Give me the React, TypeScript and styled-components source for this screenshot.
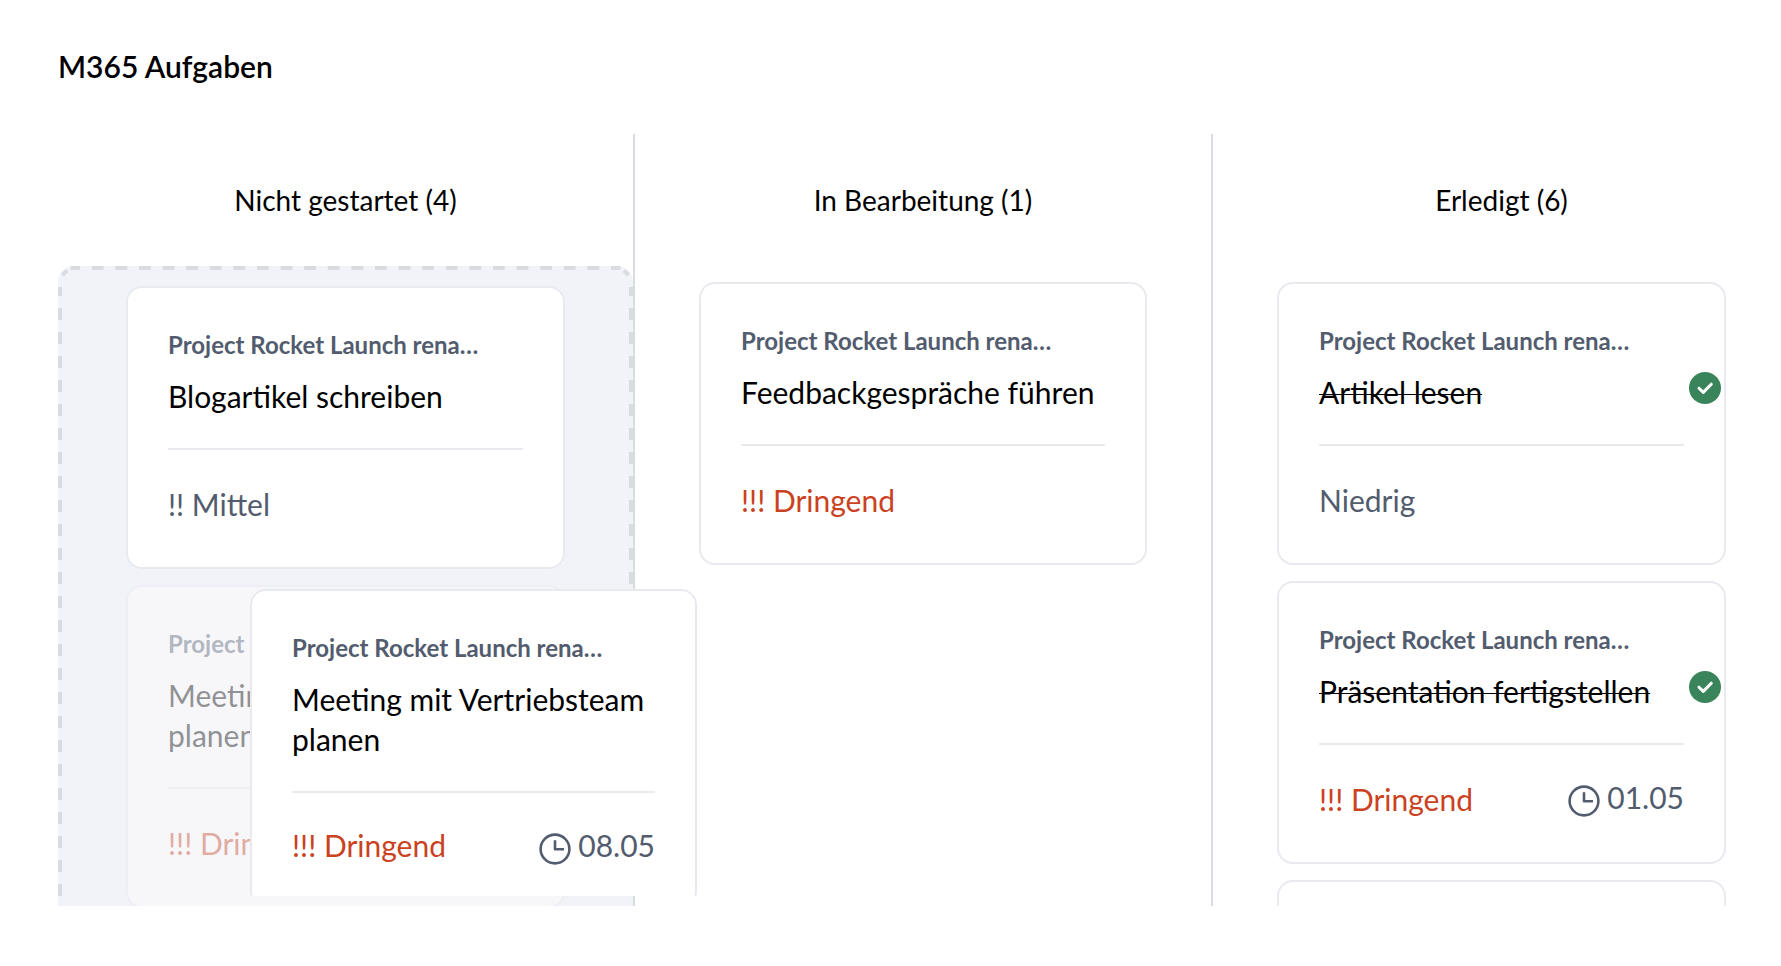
import React from "react";
import styled, { createGlobalStyle, css } from "styled-components";

const GlobalStyle = createGlobalStyle`
  *, *::before, *::after { box-sizing: border-box; }
  html, body { margin: 0; background: #ffffff; }
  body { font-family: Lato, Carlito, sans-serif; color: #000000; }
  h1, h2, h3, p, ul { margin: 0; padding: 0; }
`;

const Page = styled.main`
  display: flex;
  flex-direction: column;
  height: 100vh;
  padding: 45px 55px 60px 58px;
  overflow: hidden;
`;

const PageTitle = styled.h1`
  font-size: 30px;
  line-height: 42px;
  font-weight: 600;
  margin-bottom: 47px;
`;

const BoardArea = styled.div`
  position: relative;
  flex: 1;
  min-height: 0;
`;

const Board = styled.div`
  display: grid;
  grid-template-columns: 577fr 578fr 513fr;
  height: 100%;
  overflow: hidden;
`;

const Column = styled.section`
  display: flex;
  flex-direction: column;
  min-width: 0;
  min-height: 0;
  border-right: 2px solid #d8dbe0;

  &:last-child {
    border-right: 0;
  }
`;

const ColumnTitle = styled.h2<{ $inset?: "both" | "left" }>`
  padding: 48px ${(p) => (p.$inset === "both" ? 64 : 0)}px 48px ${(p) => (p.$inset ? 64 : 0)}px;
  font-size: 28px;
  line-height: 36px;
  font-weight: 400;
  text-align: center;
`;

const DropZone = styled.div<{ $active?: boolean }>`
  position: relative;
  flex: none;
  ${(p) =>
    p.$active &&
    css`
      padding: 4px;
      background: #f2f3f8;
      border-radius: 16px;
    `}
`;

const Outline = styled.svg`
  position: absolute;
  inset: 0;
  width: 100%;
  height: 100%;
  overflow: visible;
  fill: none;
  stroke: #d8dbe0;
  stroke-width: 4px;
  pointer-events: none;
`;

const CardList = styled.ul<{ $last?: boolean }>`
  display: flex;
  flex-direction: column;
  gap: 16px;
  padding: 16px ${(p) => (p.$last ? 0 : 64)}px 16px 64px;
  list-style: none;
`;

const Card = styled.article<{ $ghost?: boolean }>`
  position: relative;
  padding: 40px;
  background: #ffffff;
  border: 2px solid #e9eaef;
  border-radius: 16px;
  opacity: ${(p) => (p.$ghost ? 0.4 : 1)};
`;

const Project = styled.p`
  margin-bottom: 14px;
  font-size: 24px;
  line-height: 34px;
  font-weight: 700;
  color: #525c6e;
  white-space: nowrap;
`;

const TaskTitle = styled.h3<{ $done?: boolean }>`
  padding-bottom: 32px;
  border-bottom: 2px solid #e9eaef;
  font-size: 30px;
  line-height: 40px;
  font-weight: 400;
  text-decoration: ${(p) => (p.$done ? "line-through 1px" : "none")};
`;

const Meta = styled.div`
  display: flex;
  justify-content: space-between;
  align-items: flex-start;
  margin-top: 32px;
`;

const Priority = styled.span<{ $urgent?: boolean; $compact?: boolean }>`
  font-size: 30px;
  line-height: ${(p) => (p.$compact ? 40 : 45)}px;
  color: ${(p) => (p.$urgent ? "#ca4222" : "#525c6e")};
`;

const DueDate = styled.time`
  display: flex;
  align-items: flex-end;
  gap: 7px;
  font-size: 30px;
  line-height: 40px;
  color: #525c6e;

  svg {
    display: block;
  }
`;

const DoneBadge = styled.span`
  position: absolute;
  top: 88px;
  right: 3px;

  svg {
    display: block;
  }
`;

const DragLayer = styled.div`
  position: absolute;
  top: 455px;
  left: 192px;
  width: 447px;
  height: 307px;
  overflow: hidden;
`;

const ClockIcon = () => (
  <svg width="32" height="32" viewBox="0 0 32 32" fill="none" stroke="currentColor" aria-hidden="true">
    <circle cx="16" cy="16" r="14.4" strokeWidth="2.6" />
    <path d="M16 7.2V16.2h9" strokeWidth="2.6" strokeLinejoin="round" />
  </svg>
);

const CheckIcon = () => (
  <svg width="32" height="32" viewBox="0 0 32 32" fill="none" role="img" aria-label="Erledigt">
    <circle cx="16" cy="16" r="16" fill="#39845b" />
    <path d="M10 16.2l4.3 4.2 8-8.2" stroke="#ffffff" strokeWidth="3" strokeLinecap="round" strokeLinejoin="round" />
  </svg>
);

/* Dashed frame of the column that accepts the dragged card */
const DashedOutline = () => (
  <Outline aria-hidden="true">
    <line x1="12.6" y1="2" x2="97.82%" y2="2" strokeDasharray="11.8 11.8" strokeDashoffset="2.4" />
    <line x1="2" y1="21" x2="2" y2="100%" strokeDasharray="12 12" strokeDashoffset="3" />
    <path d="M4.4 9 L9 4.6" />
    <svg x="100%" overflow="visible">
      <line x1="-2" y1="21" x2="-2" y2="720" strokeDasharray="12 12" strokeDashoffset="3" />
      <path d="M-4.4 9 L-9 4.6" />
    </svg>
  </Outline>
);

type Task = {
  title: string;
  priority: "Niedrig" | "Mittel" | "Dringend";
  due?: string;
  done?: boolean;
};

const MARKS = { Niedrig: "", Mittel: "!! ", Dringend: "!!! " };

const TaskCard = ({ task, ghost, compact }: { task: Task; ghost?: boolean; compact?: boolean }) => (
  <Card $ghost={ghost}>
    <Project>Project Rocket Launch rena…</Project>
    <TaskTitle $done={task.done}>{task.title}</TaskTitle>
    <Meta>
      <Priority $urgent={task.priority === "Dringend"} $compact={compact}>
        {MARKS[task.priority]}
        {task.priority}
      </Priority>
      {task.due && (
        <DueDate>
          <ClockIcon />
          {task.due}
        </DueDate>
      )}
    </Meta>
    {task.done && (
      <DoneBadge>
        <CheckIcon />
      </DoneBadge>
    )}
  </Card>
);

const meeting: Task = { title: "Meeting mit Vertriebsteam planen", priority: "Dringend", due: "08.05" };

const doneTasks: Task[] = [
  { title: "Artikel lesen", priority: "Niedrig", done: true },
  { title: "Präsentation fertigstellen", priority: "Dringend", due: "01.05", done: true },
];

const EmptyCard = styled(Card)`
  height: 283px;
`;

export default function App() {
  return (
    <>
      <GlobalStyle />
      <Page>
        <PageTitle>M365 Aufgaben</PageTitle>
        <BoardArea>
          <Board>
            <Column>
              <ColumnTitle>Nicht gestartet (4)</ColumnTitle>
              <DropZone $active>
                <DashedOutline />
                <CardList>
                  <li>
                    <TaskCard task={{ title: "Blogartikel schreiben", priority: "Mittel" }} />
                  </li>
                  <li>
                    <TaskCard task={meeting} ghost />
                  </li>
                  <li>
                    <EmptyCard />
                  </li>
                </CardList>
              </DropZone>
            </Column>
            <Column>
              <ColumnTitle $inset="both">In Bearbeitung (1)</ColumnTitle>
              <DropZone>
                <CardList>
                  <li>
                    <TaskCard task={{ title: "Feedbackgespräche führen", priority: "Dringend" }} />
                  </li>
                </CardList>
              </DropZone>
            </Column>
            <Column>
              <ColumnTitle $inset="left">Erledigt (6)</ColumnTitle>
              <DropZone>
                <CardList $last>
                  {doneTasks.map((task) => (
                    <li key={task.title}>
                      <TaskCard task={task} />
                    </li>
                  ))}
                  <li>
                    <EmptyCard />
                  </li>
                </CardList>
              </DropZone>
            </Column>
          </Board>
          <DragLayer>
            <TaskCard task={meeting} compact />
          </DragLayer>
        </BoardArea>
      </Page>
    </>
  );
}
